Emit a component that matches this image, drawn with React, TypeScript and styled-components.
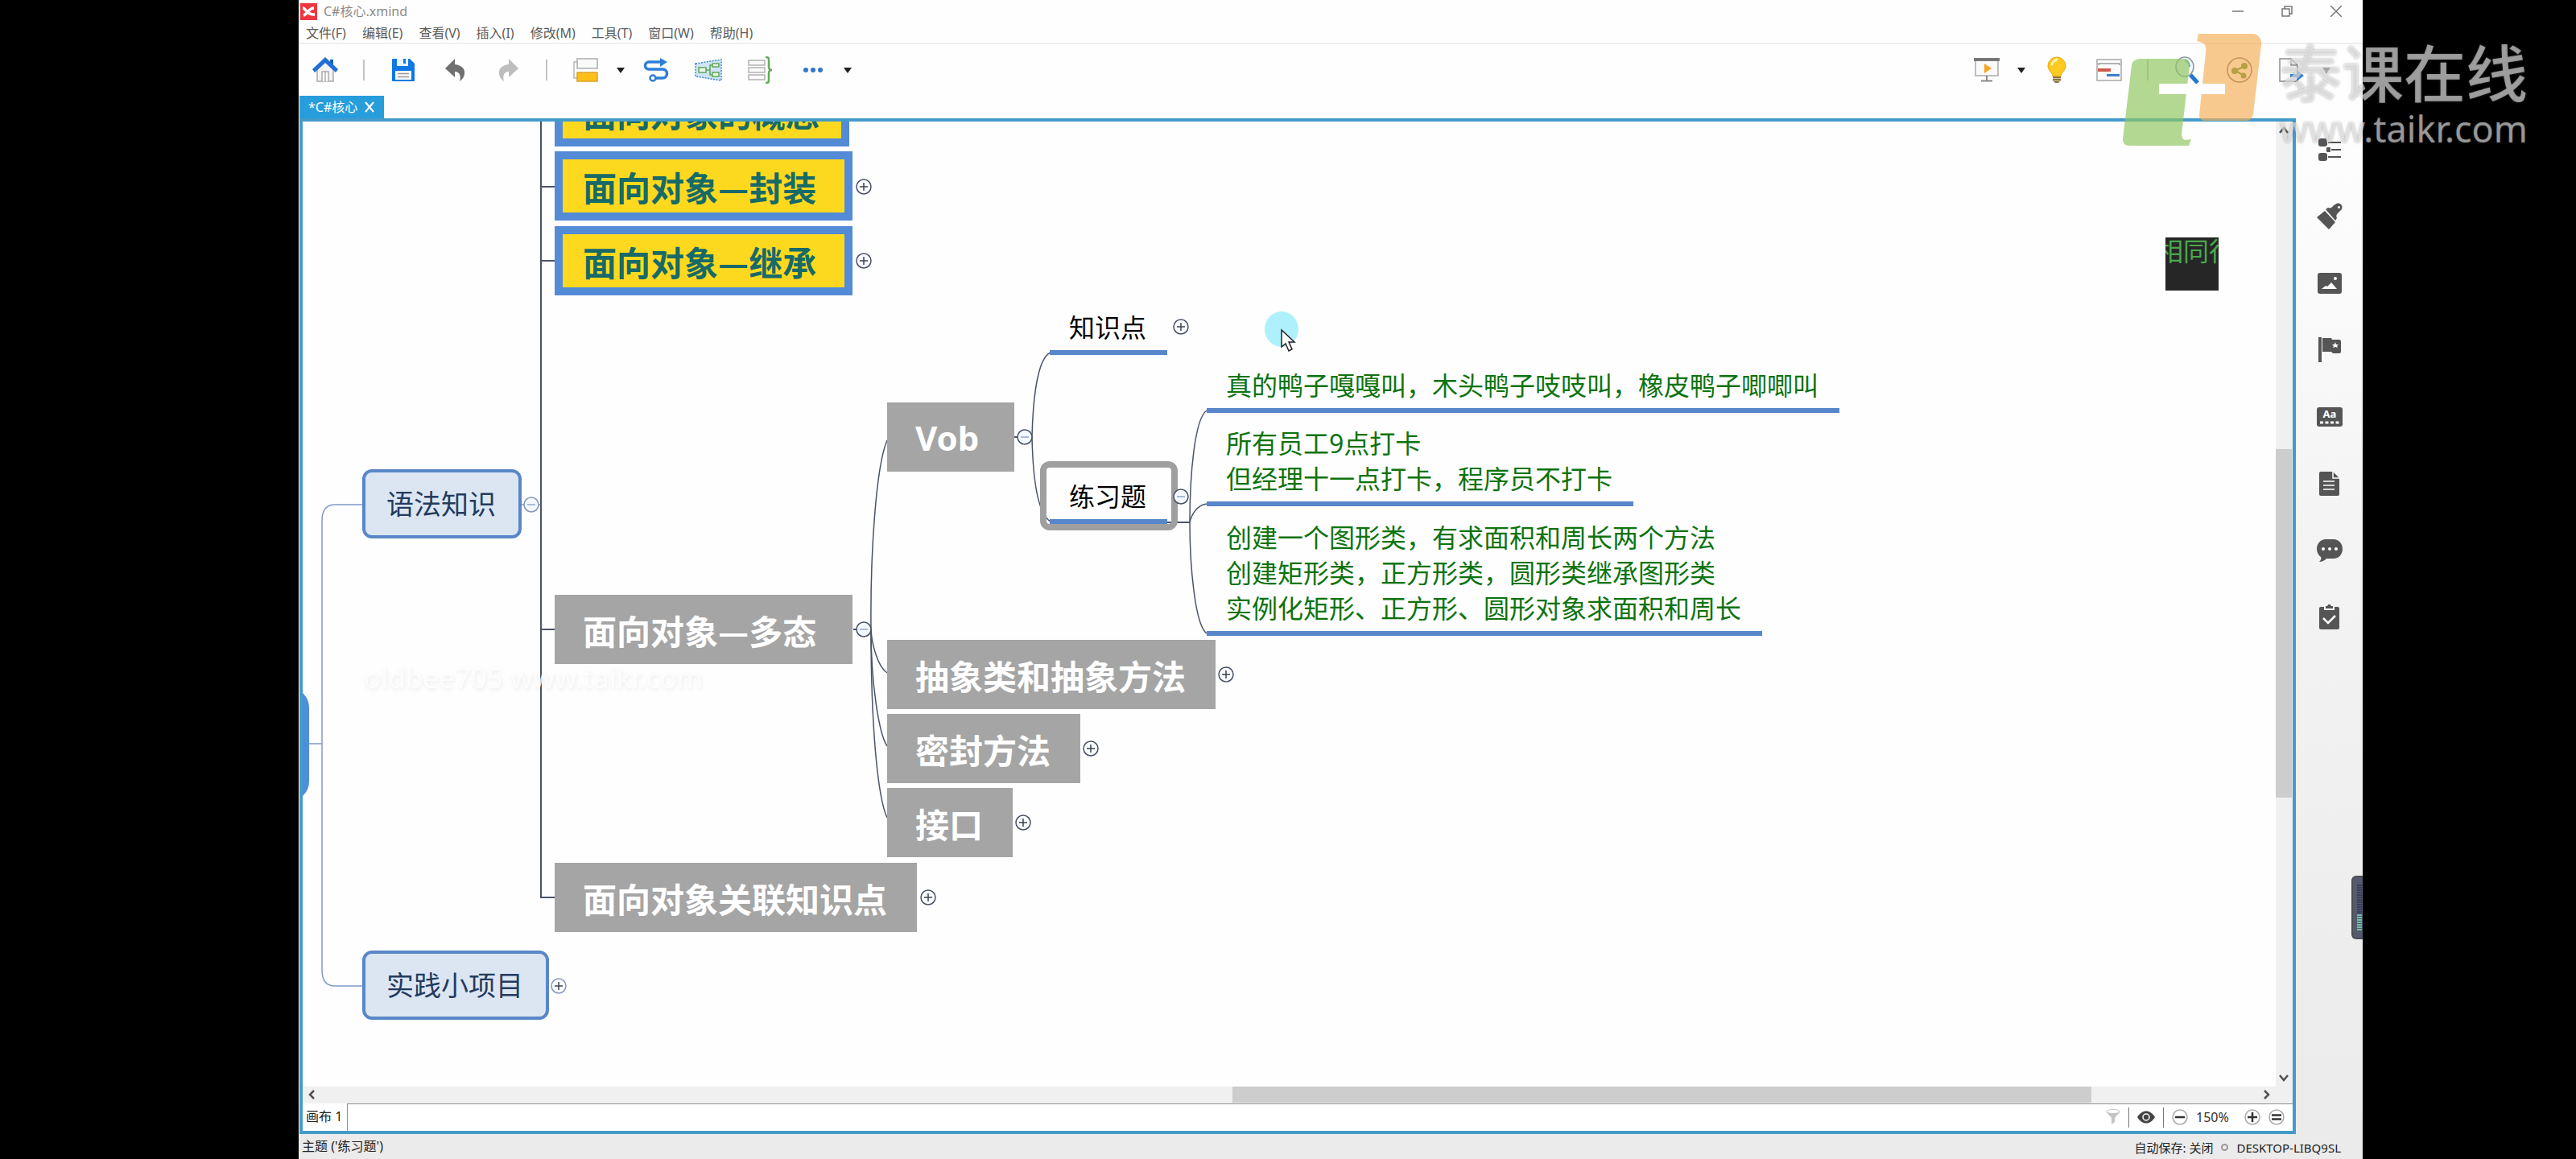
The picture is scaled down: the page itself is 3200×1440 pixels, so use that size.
import React from "react";
import styled, { createGlobalStyle } from "styled-components";

const GlobalStyle = createGlobalStyle`
  *, *::before, *::after { box-sizing: border-box; }
  body {
    margin: 0;
    background: #000;
    font-family: "Noto Sans", "Noto Sans CJK SC", sans-serif;
  }
  button {
    margin: 0;
    padding: 0;
    border: 0;
    background: none;
    color: inherit;
    font: inherit;
    white-space: nowrap;
  }
  svg { display: block; }
`;

/* ---------- frame ---------- */

const Page = styled.div`
  position: relative;
  display: grid;
  grid-template-columns: 371fr 2564fr 265fr;
  min-height: 100vh;
  overflow: hidden;
  background: #000;
`;

const Window = styled.main`
  position: relative;
  grid-column: 2;
  display: flex;
  flex-direction: column;
  min-width: 0;
  background: #fefefe;
  overflow: hidden;
`;

const TitleBar = styled.header`
  display: flex;
  align-items: center;
  height: 28px;
  padding: 0 3px 0 2px;
  gap: 8px;
`;

const FileTitle = styled.h1`
  flex: 1;
  margin: 0;
  font-size: 16px;
  line-height: 24px;
  font-weight: 400;
  color: #8a8a8a;
`;

const WindowControls = styled.div`
  display: flex;
`;

const WindowButton = styled.button`
  display: grid;
  place-items: center;
  width: 61px;
  height: 26px;
`;

const MenuBar = styled.nav`
  display: flex;
  gap: 20px;
  height: 27px;
  padding-left: 9px;
  border-bottom: 2px solid #efefef;
`;

const MenuItem = styled.button`
  font-size: 16px;
  line-height: 26px;
  color: #5c5c5c;
`;

const Toolbar = styled.div`
  display: flex;
  align-items: center;
  justify-content: space-between;
  height: 64px;
  padding-right: 34px;
`;

const ToolGroup = styled.div`
  display: flex;
  align-items: center;
`;

const ToolButton = styled.button<{ $narrow?: boolean }>`
  display: grid;
  place-items: center;
  width: ${(p) => (p.$narrow ? 22 : 65)}px;
  height: 44px;
`;

const ToolDivider = styled.span`
  width: 2px;
  height: 26px;
  margin: 0 15px;
  background: #c4c4c4;
`;

const Body = styled.div`
  flex: 1;
  display: flex;
  min-height: 0;
  padding-left: 1px;
`;

const EditorColumn = styled.section`
  flex: 1;
  display: flex;
  flex-direction: column;
  min-width: 0;
`;

const TabStrip = styled.div`
  display: flex;
  height: 28px;
`;

const FileTab = styled.div`
  display: flex;
  align-items: center;
  gap: 8px;
  padding: 0 11px;
  background: #289ddb;
  color: #fff;
  font-size: 16px;
  line-height: 28px;
`;

const Editor = styled.div`
  flex: 1;
  display: grid;
  grid-template-columns: minmax(0, 1fr) 21px;
  grid-template-rows: minmax(0, 1fr) 21px 34px;
  border: 4px solid #439bc9;
  background: #fff;
`;

/* ---------- scrollbars ---------- */

const ScrollBar = styled.div<{ $vertical?: boolean }>`
  display: flex;
  flex-direction: ${(p) => (p.$vertical ? "column" : "row")};
  padding: ${(p) => (p.$vertical ? "0 1px 0 0" : "0 0 1px 0")};
  background: #f0f0f0;
`;

const ScrollArrow = styled.button`
  display: grid;
  place-items: center;
  flex: 0 0 22px;
`;

const ScrollGap = styled.span<{ $share: number }>`
  flex: ${(p) => p.$share} 1 0;
`;

const ScrollThumb = styled.span<{ $share: number }>`
  flex: ${(p) => p.$share} 1 0;
  background: #cdcdcd;
`;

const ScrollCorner = styled.span`
  background: #f0f0f0;
`;

/* ---------- sheet bar and status bar ---------- */

const SheetBar = styled.div`
  grid-column: 1 / -1;
  display: flex;
  justify-content: space-between;
  background: #fff;
`;

const SheetTab = styled.button`
  width: 56px;
  padding: 0 0 2px 4px;
  border-right: 1px solid #8f8f8f;
  font-size: 16px;
  line-height: 30px;
  text-align: left;
  color: #222;
`;

const SheetTools = styled.div`
  flex: 1;
  display: flex;
  align-items: center;
  justify-content: flex-end;
  gap: 10px;
  padding: 0 10px 1px 0;
  border-top: 1px solid #8f8f8f;
`;

const SheetDivider = styled.span`
  width: 1px;
  height: 25px;
  background: #777;
`;

const ZoomValue = styled.output`
  width: 50px;
  font-size: 16px;
  line-height: 24px;
  color: #333;
`;

const StatusBar = styled.footer`
  display: flex;
  align-items: center;
  justify-content: space-between;
  height: 31px;
  padding: 0 27px 0 4px;
  background: #ebebeb;
  color: #222;
  font-size: 16px;
  line-height: 28px;
`;

const StatusText = styled.span`
  padding-bottom: 2px;
`;

const StatusRight = styled.div`
  display: flex;
  align-items: center;
  gap: 10px;
  padding-top: 2px;
  font-size: 15px;
`;

const StatusDot = styled.span`
  width: 9px;
  height: 9px;
  border: 2px solid #9a9a9a;
  border-radius: 50%;
`;

/* ---------- side panel ---------- */

const SidePanel = styled.aside`
  display: flex;
  flex-direction: column;
  align-items: center;
  width: 83px;
  padding-top: 25px;
  background: linear-gradient(#fefefe 0, #fcfcfc 12%, #f3f3f3 45%, #ebebeb 100%);
`;

const SideButton = styled.button`
  display: grid;
  place-items: center;
  width: 83px;
  height: 83px;
`;

const LevelMeter = styled.div`
  position: absolute;
  right: 0;
  top: 1088px;
  display: flex;
  flex-direction: column;
  align-items: center;
  width: 14px;
  height: 79px;
  padding: 9px 2px 9px 5px;
  border-radius: 6px 0 0 6px;
  border: 2px solid #4c4e52;
  border-right: 0;
  background: #555a6e;
`;

const MeterBars = styled.span<{ $on?: boolean }>`
  flex: ${(p) => (p.$on ? 21 : 40)} 1 0;
  width: 6px;
  background: repeating-linear-gradient(
    ${(p) => (p.$on ? "#6fc0a4" : "#3a3f5e")} 0 2px,
    #555a6e 2px 3px
  );
`;

/* ---------- mind map ---------- */

/* Sheet coordinates that fall on the top left corner of the viewport. */
const SCROLL = { x: 376, y: 151 };

const Canvas = styled.div`
  position: relative;
  overflow: hidden;
  background: #fefefe;
`;

const Links = styled.svg`
  position: absolute;
  left: 0;
  top: 0;
`;

const Placed = styled.div<{ $x: number; $y: number }>`
  position: absolute;
  left: ${(p) => p.$x - SCROLL.x}px;
  top: ${(p) => p.$y - SCROLL.y}px;
  white-space: nowrap;
`;

const BranchTopic = styled(Placed)`
  height: 86px;
  padding: 0 28px 0 26px;
  border: 4px solid #5987c8;
  border-radius: 12px;
  background: #dce6f3;
  color: #243b5e;
  font-size: 34px;
  line-height: 79px;
`;

const BlockTopic = styled(Placed)<{ $done?: boolean; $minWidth?: number; $latin?: boolean }>`
  min-width: ${(p) => p.$minWidth ?? 0}px;
  height: 86px;
  padding: ${(p) => (p.$done ? "0 27px 0 25px" : "0 37px 0 35px")};
  border: ${(p) => (p.$done ? "10px solid #538bd7" : "0")};
  background: ${(p) => (p.$done ? "#fcd91f" : "#a5a5a5")};
  color: ${(p) => (p.$done ? "#176a68" : "#fff")};
  font-family: ${(p) => (p.$latin ? '"Noto Sans"' : '"Noto Sans CJK SC"')}, sans-serif;
  font-size: 42px;
  font-weight: 700;
  line-height: ${(p) => (p.$done ? 67 : 87)}px;
`;

const LeafTopic = styled(Placed)<{ $note?: boolean }>`
  padding: 0 26px 6px 24px;
  border-bottom: 6px solid #5786cb;
  color: ${(p) => (p.$note ? "#0d730f" : "#000")};
  font-size: 32px;
  line-height: 44px;
`;

const Selection = styled(Placed)`
  width: 171px;
  height: 86px;
  border: 8px solid #9f9f9f;
  border-radius: 12px;
`;

const RootTopic = styled(Placed)`
  width: 60px;
  height: 140px;
  border-radius: 24px;
  background: #4b8fdd;
`;

const Toggle = styled.button<{ $x: number; $y: number }>`
  position: absolute;
  left: ${(p) => p.$x - SCROLL.x - 10}px;
  top: ${(p) => p.$y - SCROLL.y - 10}px;
  width: 20px;
  height: 20px;
`;

const Thumbnail = styled(Placed)`
  width: 66px;
  height: 66px;
  overflow: hidden;
  background: #262626;
  color: #4aa84c;
  font-size: 32px;
  line-height: 34px;
  text-indent: -10px;
`;

const UserMark = styled(Placed)`
  color: rgba(255, 255, 255, 0.8);
  font-size: 35px;
  line-height: 46px;
  text-shadow: 1px 2px 5px rgba(0, 0, 0, 0.08);
`;

/* ---------- site watermark ---------- */

const SiteMark = styled.div`
  position: absolute;
  top: 36px;
  right: 60px;
  display: flex;
  gap: 22px;
  pointer-events: none;
`;

const SiteWords = styled.div`
  color: rgba(255, 255, 255, 0.54);
  text-shadow: 0 0 3px rgba(90, 90, 90, 0.5);
`;

const SiteName = styled.div`
  font-family: "Noto Sans CJK SC", sans-serif;
  font-size: 77px;
  font-weight: 500;
  line-height: 104px;
`;

const SiteUrl = styled.div`
  font-size: 45px;
  line-height: 40px;
`;

/* ---------- data ---------- */

const menus = ["文件(F)", "编辑(E)", "查看(V)", "插入(I)", "修改(M)", "工具(T)", "窗口(W)", "帮助(H)"];

const blocks: { x: number; y: number; text: string; done?: boolean; minWidth?: number; latin?: boolean }[] = [
  { x: 689, y: 96, text: "面向对象的概念", done: true },
  { x: 689, y: 188, text: "面向对象—封装", done: true, minWidth: 370 },
  { x: 689, y: 281, text: "面向对象—继承", done: true, minWidth: 370 },
  { x: 689, y: 739, text: "面向对象—多态", minWidth: 370 },
  { x: 689, y: 1072, text: "面向对象关联知识点" },
  { x: 1102, y: 500, text: "Vob", minWidth: 158, latin: true },
  { x: 1102, y: 795, text: "抽象类和抽象方法" },
  { x: 1102, y: 887, text: "密封方法" },
  { x: 1102, y: 979, text: "接口" },
];

const leaves = [
  { x: 1304, y: 385, lines: ["知识点"] },
  { x: 1304, y: 595, lines: ["练习题"] },
  { x: 1499, y: 457, note: true, lines: ["真的鸭子嘎嘎叫，木头鸭子吱吱叫，橡皮鸭子唧唧叫"] },
  { x: 1499, y: 529, note: true, lines: ["所有员工9点打卡", "但经理十一点打卡，程序员不打卡"] },
  {
    x: 1499,
    y: 646,
    note: true,
    lines: [
      "创建一个图形类，有求面积和周长两个方法",
      "创建矩形类，正方形类，圆形类继承图形类",
      "实例化矩形、正方形、圆形对象求面积和周长",
    ],
  },
];

const toggles: { x: number; y: number; open?: boolean; light?: boolean }[] = [
  { x: 660, y: 627, open: true, light: true },
  { x: 694, y: 1225, light: true },
  { x: 1073, y: 232 },
  { x: 1073, y: 324 },
  { x: 1073, y: 782, open: true },
  { x: 1153, y: 1115 },
  { x: 1273, y: 543, open: true },
  { x: 1467, y: 406 },
  { x: 1467, y: 617, open: true },
  { x: 1523, y: 838 },
  { x: 1355, y: 930 },
  { x: 1271, y: 1022 },
];

/* ---------- icons ---------- */

const Caret = () => (
  <svg width="10" height="8" viewBox="0 0 10 8"><path d="M0 1h10L5 8z" fill="#222" /></svg>
);

const HomeIcon = () => (
  <svg width="32" height="32" viewBox="0 0 32 32">
    <path d="M6 15 16 6l10 9v15H6z" fill="#f3f3f3" stroke="#aaa" strokeWidth="1.5" />
    <path d="M12 30V18h8v12M16 18v12" fill="#fff" stroke="#aaa" strokeWidth="1.5" />
    <path d="M22 3h4v8l-4-4z" fill="#1d5fb0" />
    <path d="M0 15 16 0l16 15-3 4L16 7 3 19z" fill="#1f6fd6" />
  </svg>
);

const SaveIcon = () => (
  <svg width="28" height="28" viewBox="0 0 28 28">
    <path d="M1 0h21l6 6v21a1 1 0 0 1-1 1H1a1 1 0 0 1-1-1V1a1 1 0 0 1 1-1z" fill="#0f78e4" />
    <path d="M6 0h14v9H6z" fill="#eaf3fd" /><path d="M14 0h3v6h-3z" fill="#0f78e4" />
    <path d="M4 15h20v11H4z" fill="#f8f8f8" />
    <path d="M7 18.500h14M7 22.500h14" stroke="#999" strokeWidth="1.500" />
  </svg>
);

const UndoIcon = ({ color, flip }: { color: string; flip?: boolean }) => (
  <svg width="26" height="28" viewBox="0 0 26 28">
    <path
      d="M12 0v7c9 1 13 6 12 12-.5 4-3 7-6 9 2-7 0-12-6-12v7L0 12z"
      fill={color}
      transform={flip ? "matrix(-1 0 0 1 26 0)" : undefined}
    />
  </svg>
);

const TopicIcon = () => (
  <svg width="32" height="30" viewBox="0 0 32 30">
    <path d="M5 5H1v20h4" fill="none" stroke="#b5b5b5" strokeWidth="1.500" />
    <rect x="5" y="1" width="25" height="12" fill="#fafafa" stroke="#adadad" strokeWidth="1.500" />
    <rect x="5" y="18" width="25" height="11" fill="#fdc01b" stroke="#dba22a" strokeWidth="1.500" />
  </svg>
);

const RelationIcon = () => (
  <svg width="32" height="30" viewBox="0 0 32 30">
    <path d="M22 5H7a4.500 4.500 0 0 0 0 9h17a5 5 0 0 1 0 11h-9" fill="none" stroke="#2d7ed9" strokeWidth="3.500" />
    <path d="M21 0l9 5-9 6z" fill="#2d7ed9" />
    <circle cx="12" cy="25" r="3.500" fill="#fff" stroke="#2d7ed9" strokeWidth="2.500" />
  </svg>
);

const BoundaryIcon = () => (
  <svg width="34" height="28" viewBox="0 0 34 28">
    <path d="M1 6 33 1v26L1 22z" fill="#cfe4f7" stroke="#3a83cf" strokeWidth="1.500" strokeDasharray="2 1.500" />
    <path d="M14 14h5M22 8h-3v12h3" fill="none" stroke="#5fa557" strokeWidth="1.500" />
    <path d="M5 11h9v6H5zM22 6h8v4h-8zM22 17h8v5h-8z" fill="#eef8ea" stroke="#5fa557" strokeWidth="1.500" />
  </svg>
);

const SummaryIcon = () => (
  <svg width="32" height="34" viewBox="0 0 32 34">
    <path d="M1 5h20v6H1zM1 14h20v6H1zM1 23h20v6H1z" fill="#fafafa" stroke="#b2b2b2" strokeWidth="1.500" />
    <path d="M22 1c4 0 4 1 4 4v8c0 2 1 4 4 4-3 0-4 2-4 4v8c0 3 0 4-4 4" fill="none" stroke="#62ab5a" strokeWidth="2.500" />
  </svg>
);

const MoreIcon = () => (
  <svg width="26" height="8" viewBox="0 0 26 8" fill="#2f77cc">
    <circle cx="4" cy="4" r="3" /><circle cx="13" cy="4" r="3" /><circle cx="22" cy="4" r="3" />
  </svg>
);

const PresentIcon = () => (
  <svg width="32" height="32" viewBox="0 0 32 32">
    <rect x="2" y="3" width="28" height="20" fill="#fafafa" stroke="#aaa" strokeWidth="1.500" />
    <path d="M0 1h32v4H0z" fill="#777" />
    <path d="M13 8v12l9-6z" fill="#f6a623" />
    <path d="M16 23v6M9 29.500h14" stroke="#888" strokeWidth="2" />
  </svg>
);

const BulbIcon = () => (
  <svg width="24" height="34" viewBox="0 0 24 34">
    <path d="M12 1a11 11 0 0 0-11 11c0 6 6 8 6 13h10c0-5 6-7 6-13A11 11 0 0 0 12 1z" fill="#fdc922" stroke="#e9a713" />
    <path d="M6 10c1-4 3-5 6-6" fill="none" stroke="#fff3b8" strokeWidth="3" strokeLinecap="round" />
    <path d="M7 25h10v5l-3 3h-4l-3-3z" fill="#8d7446" />
    <path d="M7 27.500h10M8 30.500h8" stroke="#d6c39b" />
  </svg>
);

const GanttIcon = () => (
  <svg width="32" height="28" viewBox="0 0 32 28">
    <rect x="1" y="1" width="30" height="26" fill="#fcfcfc" stroke="#a8a8a8" strokeWidth="1.500" />
    <path d="M3 8V6h26v2" fill="none" stroke="#999" strokeWidth="1.500" />
    <path d="M2 12h16v4H2z" fill="#cd5b4d" /><path d="M13 19h16v3H13z" fill="#3b80cc" />
  </svg>
);

const SearchIcon = () => (
  <svg width="32" height="34" viewBox="0 0 32 34">
    <path d="m20 23 9 10" stroke="#2476d3" strokeWidth="5" />
    <ellipse cx="13" cy="13" rx="11" ry="12" fill="#eef5fb" fillOpacity=".7" stroke="#8795a0" strokeWidth="1.500" />
    <path d="M13 5c4 1 6 4 6 8" fill="none" stroke="#6aa9e8" strokeWidth="2" />
  </svg>
);

const ShareIcon = () => (
  <svg width="32" height="34" viewBox="0 0 32 34">
    <circle cx="16" cy="17" r="15" fill="none" stroke="#666" strokeWidth="1.500" />
    <path d="M22 12 11 18l11 6" fill="none" stroke="#3f8a2c" strokeWidth="2.500" />
    <g fill="#3f8a2c"><circle cx="22" cy="12" r="4" /><circle cx="10" cy="18" r="4" /><circle cx="21" cy="24" r="3.500" /></g>
  </svg>
);

const ExportIcon = () => (
  <svg width="32" height="30" viewBox="0 0 32 30">
    <path d="M1 1h14l8 8v20H1z" fill="#fafafa" stroke="#8d8d8d" strokeWidth="1.500" />
    <path d="M15 1v8h8" fill="none" stroke="#8d8d8d" strokeWidth="1.500" />
    <path d="M14 20h8v-5l9 7-9 7v-5h-8z" fill="#3482d8" />
  </svg>
);

const Svg = ({ w, h, children }: { w: number; h: number; children: React.ReactNode }) => (
  <svg width={w} height={h} viewBox={`0 0 ${w} ${h}`} fill="#555">{children}</svg>
);

const sideIcons: { name: string; icon: React.ReactNode }[] = [
  {
    name: "大纲",
    icon: (
      <Svg w={28} h={30}>
        <rect width="11" height="10" rx="3" y="1" /><rect width="11" height="10" rx="3" y="19" />
        <rect x="10" y="12" width="5" height="6" rx="1" />
        <path d="M12 5h16v2H12zM16 14h12v2H16zM12 23h16v2H12z" />
      </Svg>
    ),
  },
  {
    name: "格式",
    icon: (
      <Svg w={32} h={34}>
        <path d="M10 10 0 18l15 15 8-9z" />
        <path d="m11 8 3-2c3 1 5 0 7-3l2-1c2-2 5-2 7 0 2 2 2 5 0 7l-4 4c-2 2-2 4-1 6l-2 3z" />
        <circle cx="27.500" cy="5.500" r="1.500" fill="#fff" />
      </Svg>
    ),
  },
  {
    name: "图片",
    icon: (
      <Svg w={30} h={26}>
        <rect width="30" height="26" rx="3" />
        <path d="m5 20 5-4 2 1 5-5 7 8z" fill="#fff" /><circle cx="22" cy="7" r="2" fill="#fff" />
      </Svg>
    ),
  },
  {
    name: "标记",
    icon: (
      <Svg w={28} h={31}>
        <path d="M0 0h4v31H0zM5 1h11l1 2h9a2 2 0 0 1 2 2v13a2 2 0 0 1-2 2h-8l-2-2H5z" />
        <path d="m21 6 1 3h3l-2 2 1 2-3-1-3 1 1-2-2-2h3z" fill="#fff" />
      </Svg>
    ),
  },
  {
    name: "标签",
    icon: (
      <Svg w={32} h={24}>
        <rect width="32" height="24" rx="3" />
        <text x="16" y="13" fill="#fff" fontSize="13" fontWeight="700" textAnchor="middle">Aa</text>
        <path d="M4 19h24" stroke="#fff" strokeWidth="3" strokeDasharray="4 2.500" />
      </Svg>
    ),
  },
  {
    name: "备注",
    icon: (
      <Svg w={25} h={30}>
        <path d="M2 0h15l8 8v20a2 2 0 0 1-2 2H2a2 2 0 0 1-2-2V2a2 2 0 0 1 2-2z" />
        <path d="M17 0v8h8M5 12h14M5 17h14M5 22h14" fill="none" stroke="#fff" strokeWidth="1.500" />
      </Svg>
    ),
  },
  {
    name: "批注",
    icon: (
      <Svg w={32} h={28}>
        <path d="M11 0h10c6 0 11 5 11 12s-5 12-11 12H12c-2 2-5 4-9 4 2-2 3-4 2-6-3-2-5-6-5-10C0 5 5 0 11 0z" />
        <g fill="#fff"><circle cx="8" cy="12" r="2" /><circle cx="16" cy="12" r="2" /><circle cx="24" cy="12" r="2" /></g>
      </Svg>
    ),
  },
  {
    name: "任务",
    icon: (
      <Svg w={25} h={31}>
        <path d="M2 3h4v4h13V3h4a2 2 0 0 1 2 2v24a2 2 0 0 1-2 2H2a2 2 0 0 1-2-2V5a2 2 0 0 1 2-2z" />
        <path d="M8 2h2c1-3 4-3 5 0h2v3H8z" />
        <path d="m5 17 6 6 9-9" fill="none" stroke="#fff" strokeWidth="2.500" />
      </Svg>
    ),
  },
];

const Chevron = ({ d }: { d: string }) => (
  <svg width="12" height="12" viewBox="0 0 12 12" fill="none" stroke="#505050" strokeWidth="2.500"><path d={d} /></svg>
);

const RoundSign = ({ d }: { d: string }) => (
  <svg width="20" height="20" viewBox="0 0 20 20" fill="none">
    <circle cx="10" cy="10" r="9" stroke="#aaa" strokeWidth="1.500" />
    <path d={d} stroke="#333" strokeWidth="2.500" />
  </svg>
);

const MapLinks = () => (
  <Links width="2451" height="1199" viewBox="376 151 2451 1199" fill="none">
    <g stroke="#8099c9" strokeWidth="1.500">
      <path d="M384 924h16M450 627h-34q-16 0-16 20v558q0 20 16 20h34M648 627h3M669 627h4" />
    </g>
    <g stroke="#4a5468" strokeWidth="2">
      <path d="M672 151v965M672 232h17M672 324h17M672 782h17M672 1115h17M1060 782h4M1260 543h4M1450 649h28" />
    </g>
    <g stroke="#4a5468" strokeWidth="1.500">
      <path d="M1082 782C1081 690 1088 580 1102 547" />
      <path d="M1082 782C1083 800 1090 828 1102 836" />
      <path d="M1082 782C1082 850 1092 912 1102 927" />
      <path d="M1082 782C1082 900 1090 990 1102 1016" />
      <path d="M1282 543C1283 500 1288 445 1305 438" />
      <path d="M1282 543C1283 590 1288 638 1305 648" />
      <path d="M1478 649C1478 590 1484 520 1499 510" />
      <path d="M1478 649C1480 640 1486 628 1499 626" />
      <path d="M1478 649C1478 700 1484 776 1499 787" />
    </g>
  </Links>
);

export default function App() {
  return (
    <>
      <GlobalStyle />
      <Page>
        <Window>
          <TitleBar>
            <svg width="21" height="21" viewBox="0 0 21 21">
              <rect width="21" height="21" fill="#ee3640" />
              <path d="M3 6c4 0 5 9 15 8M4 15c5-1 6-9 13-9" fill="none" stroke="#fff" strokeWidth="3.500" />
            </svg>
            <FileTitle>C#核心.xmind</FileTitle>
            <WindowControls>
              <WindowButton aria-label="最小化">
                <svg width="14" height="14" viewBox="0 0 14 14"><path d="M0 7h14" stroke="#777" strokeWidth="1.500" /></svg>
              </WindowButton>
              <WindowButton aria-label="还原">
                <svg width="14" height="14" viewBox="0 0 14 14" fill="none" stroke="#777" strokeWidth="1.500">
                  <path d="M1 4h9v9H1zM4 4V1h9v9h-3" />
                </svg>
              </WindowButton>
              <WindowButton aria-label="关闭">
                <svg width="14" height="14" viewBox="0 0 14 14" stroke="#777" strokeWidth="1.500"><path d="m0 0 14 14M14 0 0 14" /></svg>
              </WindowButton>
            </WindowControls>
          </TitleBar>

          <MenuBar>
            {menus.map((m) => <MenuItem key={m}>{m}</MenuItem>)}
          </MenuBar>

          <Toolbar>
            <ToolGroup>
              <ToolButton aria-label="主页"><HomeIcon /></ToolButton>
              <ToolDivider />
              <ToolButton aria-label="保存"><SaveIcon /></ToolButton>
              <ToolButton aria-label="撤销"><UndoIcon color="#707070" /></ToolButton>
              <ToolButton aria-label="重做"><UndoIcon color="#bdbdbd" flip /></ToolButton>
              <ToolDivider />
              <ToolButton aria-label="主题"><TopicIcon /></ToolButton>
              <ToolButton $narrow aria-label="主题选项"><Caret /></ToolButton>
              <ToolButton aria-label="联系"><RelationIcon /></ToolButton>
              <ToolButton aria-label="外框"><BoundaryIcon /></ToolButton>
              <ToolButton aria-label="概要"><SummaryIcon /></ToolButton>
              <ToolButton aria-label="更多"><MoreIcon /></ToolButton>
              <ToolButton $narrow aria-label="更多选项"><Caret /></ToolButton>
            </ToolGroup>
            <ToolGroup>
              <ToolButton aria-label="演示"><PresentIcon /></ToolButton>
              <ToolButton $narrow aria-label="演示选项"><Caret /></ToolButton>
              <ToolButton aria-label="头脑风暴"><BulbIcon /></ToolButton>
              <ToolButton aria-label="甘特图"><GanttIcon /></ToolButton>
              <ToolDivider />
              <ToolButton aria-label="搜索"><SearchIcon /></ToolButton>
              <ToolButton aria-label="分享"><ShareIcon /></ToolButton>
              <ToolButton aria-label="导出"><ExportIcon /></ToolButton>
              <ToolButton $narrow aria-label="导出选项"><Caret /></ToolButton>
            </ToolGroup>
          </Toolbar>

          <Body>
            <EditorColumn>
              <TabStrip>
                <FileTab>
                  <button>*C#核心</button>
                  <button aria-label="关闭标签">
                    <svg width="14" height="14" viewBox="0 0 14 14" stroke="#fff" strokeWidth="2"><path d="m2 1 10 12M12 1 2 13" /></svg>
                  </button>
                </FileTab>
              </TabStrip>
              <Editor>
                <Canvas>
                  <MapLinks />
                  <RootTopic $x={324} $y={855} />
                  <BranchTopic $x={450} $y={583}>语法知识</BranchTopic>
                  <BranchTopic $x={450} $y={1181}>实践小项目</BranchTopic>
                  {blocks.map((b) => (
                    <BlockTopic key={b.text} $x={b.x} $y={b.y} $done={b.done} $minWidth={b.minWidth} $latin={b.latin}>
                      {b.text}
                    </BlockTopic>
                  ))}
                  <Selection $x={1292} $y={573} />
                  {leaves.map((l) => (
                    <LeafTopic key={l.lines[0]} $x={l.x} $y={l.y} $note={l.note}>
                      {l.lines.map((t) => <div key={t}>{t}</div>)}
                    </LeafTopic>
                  ))}
                  {toggles.map((t) => (
                    <Toggle key={`${t.x}-${t.y}`} $x={t.x} $y={t.y} aria-label={t.open ? "收起" : "展开"}>
                      <svg width="20" height="20" viewBox="0 0 20 20" fill="none" stroke={t.light ? "#8596bb" : "#465066"} strokeWidth="1.500">
                        <circle cx="10" cy="10" r="9" fill={t.open ? "#f4f9ff" : "#fdfdff"} />
                        {t.open
                          ? <path d="M5 10h10" stroke="#8fa6cf" />
                          : <path d="M5 10h10M10 5v10" stroke="#3a4254" />}
                      </svg>
                    </Toggle>
                  ))}
                  <Thumbnail $x={2690} $y={295}>相同行</Thumbnail>
                  <UserMark $x={452} $y={819}>oldbee705 www.taikr.com</UserMark>
                  <Placed $x={1571} $y={387}>
                    <svg width="44" height="52" viewBox="0 0 44 52">
                      <ellipse cx="21" cy="22" rx="21" ry="22" fill="#aef1fc" />
                      <path d="M21 23v21l5-4 4 9 4-2-4-9h7z" fill="#fff" stroke="#222" strokeWidth="1.500" />
                    </svg>
                  </Placed>
                </Canvas>
                <ScrollBar $vertical>
                  <ScrollArrow aria-label="向上滚动"><Chevron d="m1 9 5-6 5 6" /></ScrollArrow>
                  <ScrollGap $share={385} />
                  <ScrollThumb $share={433} />
                  <ScrollGap $share={337} />
                  <ScrollArrow aria-label="向下滚动"><Chevron d="m1 3 5 6 5-6" /></ScrollArrow>
                </ScrollBar>
                <ScrollBar>
                  <ScrollArrow aria-label="向左滚动"><Chevron d="M9 1 4 6l5 5" /></ScrollArrow>
                  <ScrollGap $share={1133} />
                  <ScrollThumb $share={1067} />
                  <ScrollGap $share={207} />
                  <ScrollArrow aria-label="向右滚动"><Chevron d="m3 1 5 5-5 5" /></ScrollArrow>
                </ScrollBar>
                <ScrollCorner />
                <SheetBar>
                  <SheetTab>画布 1</SheetTab>
                  <SheetTools>
                    <button aria-label="筛选">
                      <svg width="18" height="20" viewBox="0 0 18 20">
                        <path d="M0 3 7 11v8l4-3v-5l7-8z" fill="#c4c4c4" />
                        <ellipse cx="9" cy="3" rx="8" ry="2.500" fill="#fff" stroke="#c4c4c4" />
                      </svg>
                    </button>
                    <SheetDivider />
                    <button aria-label="显示">
                      <svg width="22" height="16" viewBox="0 0 22 16">
                        <path d="M0 8c6-10 16-10 22 0-6 10-16 10-22 0z" fill="#444" />
                        <circle cx="11" cy="8" r="4" fill="#444" stroke="#fff" strokeWidth="1.500" />
                      </svg>
                    </button>
                    <SheetDivider />
                    <button aria-label="缩小"><RoundSign d="M4 10h12" /></button>
                    <ZoomValue>150%</ZoomValue>
                    <button aria-label="放大"><RoundSign d="M4 10h12M10 4v12" /></button>
                    <button aria-label="实际大小"><RoundSign d="M4 7.500h12M4 12.500h12" /></button>
                  </SheetTools>
                </SheetBar>
              </Editor>
            </EditorColumn>
            <SidePanel>
              {sideIcons.map((s) => <SideButton key={s.name} aria-label={s.name}>{s.icon}</SideButton>)}
            </SidePanel>
          </Body>

          <StatusBar>
            <StatusText>主题 ('练习题')</StatusText>
            <StatusRight>
              <span>自动保存: 关闭</span>
              <StatusDot />
              <span>DESKTOP-LIBQ9SL</span>
            </StatusRight>
          </StatusBar>
          <LevelMeter><MeterBars /><MeterBars $on /></LevelMeter>
        </Window>

        <SiteMark>
          <svg width="174" height="150" viewBox="0 0 174 150">
            <path d="M22 37h57q5 1 5 8l-10 86q0 5 4 7l8-1-3 8H8q-7-1-7-8L12 45q1-7 10-8z" fill="#8fc55f" fillOpacity=".68" />
            <path d="M95 6h70q9 4 8 14l-10 86q-2 8-8 8h-53q-6-1-6-7l8-78q1-10-4-12l-7-2z" fill="#f5ad55" fillOpacity=".66" />
            <path d="M46 68h82v13H46z" fill="#fff" />
          </svg>
          <SiteWords>
            <SiteName>泰课在线</SiteName>
            <SiteUrl>www.taikr.com</SiteUrl>
          </SiteWords>
        </SiteMark>
      </Page>
    </>
  );
}
